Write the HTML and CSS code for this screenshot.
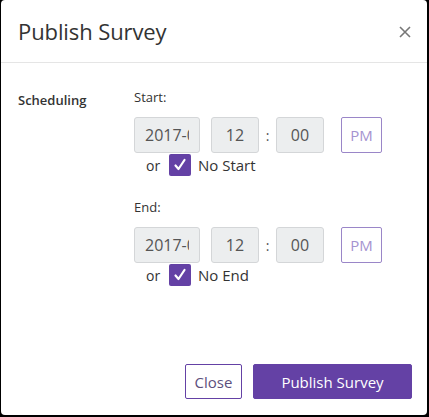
FILE: index.html
```html
<!DOCTYPE html>
<html>
<head>
<meta charset="utf-8">
<link rel="stylesheet" href="styles.css">
</head>
<body>
<div class="modal">
  <div class="header">
    <div class="title">Publish Survey</div>
    <div class="close-x">
      <svg width="12" height="12" viewBox="0 0 12 12"><path d="M1 1 L11 11 M11 1 L1 11" stroke="#777" stroke-width="1.6" fill="none"/></svg>
    </div>
  </div>
  <div class="body">
    <div class="label">Scheduling</div>
    <div class="fields">
      <div class="group">
        <div class="sub">Start:</div>
        <div class="inputs">
          <input class="field date" type="text" value="2017-05-14" readonly>
          <div class="field num">12</div>
          <div class="colon">:</div>
          <div class="field num">00</div>
          <div class="ampm">PM</div>
        </div>
        <div class="check-row">
          <span class="or">or</span>
          <span class="box"><svg width="14" height="14" viewBox="0 0 14 14"><path d="M2.5 7.5 L5.5 11 L11.5 2" stroke="#fff" stroke-width="2.2" fill="none" stroke-linecap="round" stroke-linejoin="round"/></svg></span>
          <span class="check-label">No Start</span>
        </div>
      </div>
      <div class="group end">
        <div class="sub">End:</div>
        <div class="inputs">
          <input class="field date" type="text" value="2017-05-14" readonly>
          <div class="field num">12</div>
          <div class="colon">:</div>
          <div class="field num">00</div>
          <div class="ampm">PM</div>
        </div>
        <div class="check-row">
          <span class="or">or</span>
          <span class="box"><svg width="14" height="14" viewBox="0 0 14 14"><path d="M2.5 7.5 L5.5 11 L11.5 2" stroke="#fff" stroke-width="2.2" fill="none" stroke-linecap="round" stroke-linejoin="round"/></svg></span>
          <span class="check-label">No End</span>
        </div>
      </div>
    </div>
  </div>
  <div class="footer">
    <button class="btn btn-close">Close</button>
    <button class="btn btn-primary">Publish Survey</button>
  </div>
</div>
</body>
</html>
```
FILE: styles.css
```css
html, body {
  margin: 0;
  padding: 0;
  background: #000;
}
body {
  font-family: "Open Sans", "Noto Sans", sans-serif;
  color: #333;
  width: 429px;
  height: 417px;
  overflow: hidden;
}
.modal {
  box-sizing: border-box;
  margin-left: 1px;
  width: 426px;
  height: 415px;
  background: #fff;
  border-radius: 4px;
  display: flex;
  flex-direction: column;
}
.header {
  height: 62px;
  border-bottom: 1px solid #e5e5e5;
  display: flex;
  align-items: center;
  justify-content: space-between;
  padding: 0 16px 0 17px;
}
.title {
  font-size: 22px;
  color: #333;
  letter-spacing: -0.1px;
}
.close-x {
  display: flex;
  margin-top: 1px;
}
.body {
  display: flex;
  padding: 25px 0 0 17px;
  flex: 1;
}
.label {
  width: 116px;
  font-size: 13px;
  font-weight: 600;
  line-height: 18px;
  padding-top: 3px;
  color: #333;
}
.sub {
  font-size: 13px;
  line-height: 18px;
  color: #333;
}
.inputs {
  display: flex;
  align-items: center;
  margin-top: 11px;
}
.field {
  box-sizing: border-box;
  height: 36px;
  background: #eceeef;
  border: 1px solid #d4d6d8;
  border-radius: 3px;
  font-family: "Open Sans", "Noto Sans", sans-serif;
  font-size: 16px;
  color: #555;
  display: flex;
  align-items: center;
  margin: 0;
}
.date {
  width: 66px;
  padding: 0 10px 0 10px;
  outline: none;
}
.num {
  width: 48px;
  justify-content: center;
}
.date + .num {
  margin-left: 11px;
}
.colon {
  width: 17px;
  text-align: center;
  font-size: 14px;
  color: #555;
}
.ampm {
  box-sizing: border-box;
  margin-left: 17px;
  width: 41px;
  height: 36px;
  border: 1px solid #9a86c8;
  border-radius: 2px;
  color: #a593d0;
  font-size: 15px;
  display: flex;
  align-items: center;
  justify-content: center;
}
.check-row {
  display: flex;
  align-items: center;
  margin-top: 1px;
  height: 22px;
}
.or {
  font-size: 14px;
  color: #333;
  margin-left: 12px;
  width: 23px;
}
.box {
  width: 22px;
  height: 22px;
  background: #6441a5;
  border-radius: 2px;
  display: flex;
  align-items: center;
  justify-content: center;
}
.check-label {
  margin-left: 7px;
  font-size: 15px;
  color: #333;
}
.group.end {
  margin-top: 22px;
}
.footer {
  display: flex;
  justify-content: flex-end;
  gap: 11px;
  padding: 0 15px 16px 0;
}
.btn {
  box-sizing: border-box;
  height: 35px;
  font-family: "Open Sans", "Noto Sans", sans-serif;
  font-size: 15px;
  border-radius: 2px;
  cursor: pointer;
}
.btn-close {
  width: 57px;
  background: #fff;
  border: 1px solid #6441a5;
  color: #5c4f7d;
  padding: 0;
}
.btn-primary {
  width: 159px;
  background: #6441a5;
  border: 1px solid #6441a5;
  color: #fff;
  padding: 0;
}
```
